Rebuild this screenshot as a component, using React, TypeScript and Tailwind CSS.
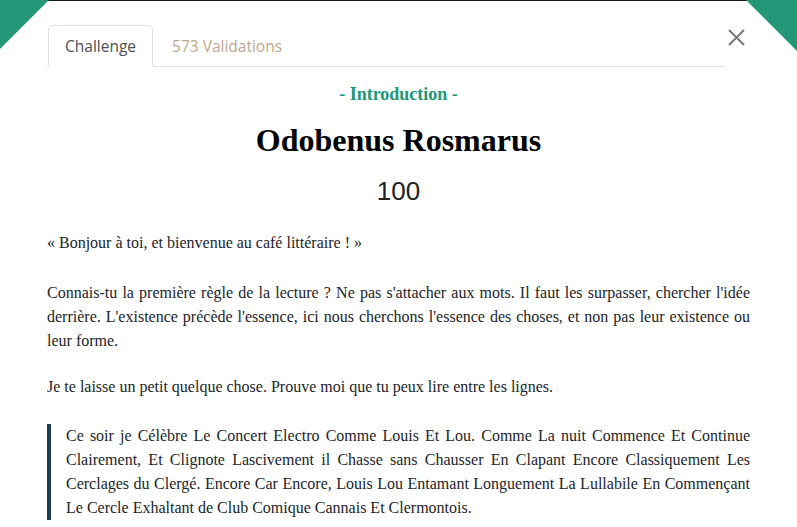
import React from "react";

export default function App() {
  return (
    <div className="relative w-[797px] h-[527px] overflow-hidden bg-white font-['Liberation_Serif',serif] text-[#212529]">
      <div className="h-px bg-[#151a22]" />
      {/* corner triangles */}
      <svg className="absolute left-0 top-0" width="50" height="50" viewBox="0 0 50 50">
        <polygon points="0,0 49,0 0,49" fill="#239677" />
      </svg>
      <svg className="absolute right-0 top-0" width="51" height="51" viewBox="0 0 51 51">
        <polygon points="0,0 51,0 51,51" fill="#239677" />
      </svg>

      <div className="px-[47px] pt-[24px]">
        <div className="flex items-start">
          <ul className="flex w-[678px] border-b border-[#dee2e6] pl-px font-['Open_Sans',sans-serif] text-[15.5px]">
            <li className="-mb-px rounded-t-[5px] border border-[#dee2e6] border-b-white bg-white px-[16px] py-2 leading-6 text-[#495057]">
              Challenge
            </li>
            <li className="-mb-px border border-transparent px-[18px] py-2 leading-6 text-[#bba98f]">
              573 Validations
            </li>
          </ul>
          <button className="ml-[3px] mt-[4px] flex h-[17px] w-[17px] items-center justify-center">
            <svg width="17" height="17" viewBox="0 0 17 17">
              <path d="M1 1 L16 16 M16 1 L1 16" stroke="#787878" strokeWidth="2" fill="none" />
            </svg>
          </button>
        </div>

        <div className="mt-[15px] text-center text-[18px] font-bold leading-6 text-[#239677]">
          - Introduction -
        </div>
        <h1 className="mt-[14px] text-center text-[32px] font-bold leading-[40px] text-black">
          Odobenus Rosmarus
        </h1>
        <div className="mt-[16px] text-center font-['Liberation_Sans',sans-serif] text-[26px] leading-[30px] text-[#222]">
          100
        </div>

        <div className="text-justify text-[16px] leading-6">
          <p className="mt-[25px]">« Bonjour à toi, et bienvenue au café littéraire ! »</p>
          <p className="mt-[26px]">
            Connais-tu la première règle de la lecture ? Ne pas s'attacher aux mots. Il faut les surpasser, chercher l'idée
            derrière. L'existence précède l'essence, ici nous cherchons l'essence des choses, et non pas leur existence ou
            leur forme.
          </p>
          <p className="mt-[22px]">Je te laisse un petit quelque chose. Prouve moi que tu peux lire entre les lignes.</p>
          <blockquote className="mt-[25px] border-l-4 border-[#1b3d57] pl-[15px]">
            Ce soir je Célèbre Le Concert Electro Comme Louis Et Lou. Comme La nuit Commence Et Continue Clairement, Et
            Clignote Lascivement il Chasse sans Chausser En Clapant Encore Classiquement Les Cerclages du Clergé. Encore
            Car Encore, Louis Lou Entamant Longuement La Lullabile En Commençant Le Cercle Exhaltant de Club Comique
            Cannais Et Clermontois.
          </blockquote>
        </div>
      </div>
    </div>
  );
}
